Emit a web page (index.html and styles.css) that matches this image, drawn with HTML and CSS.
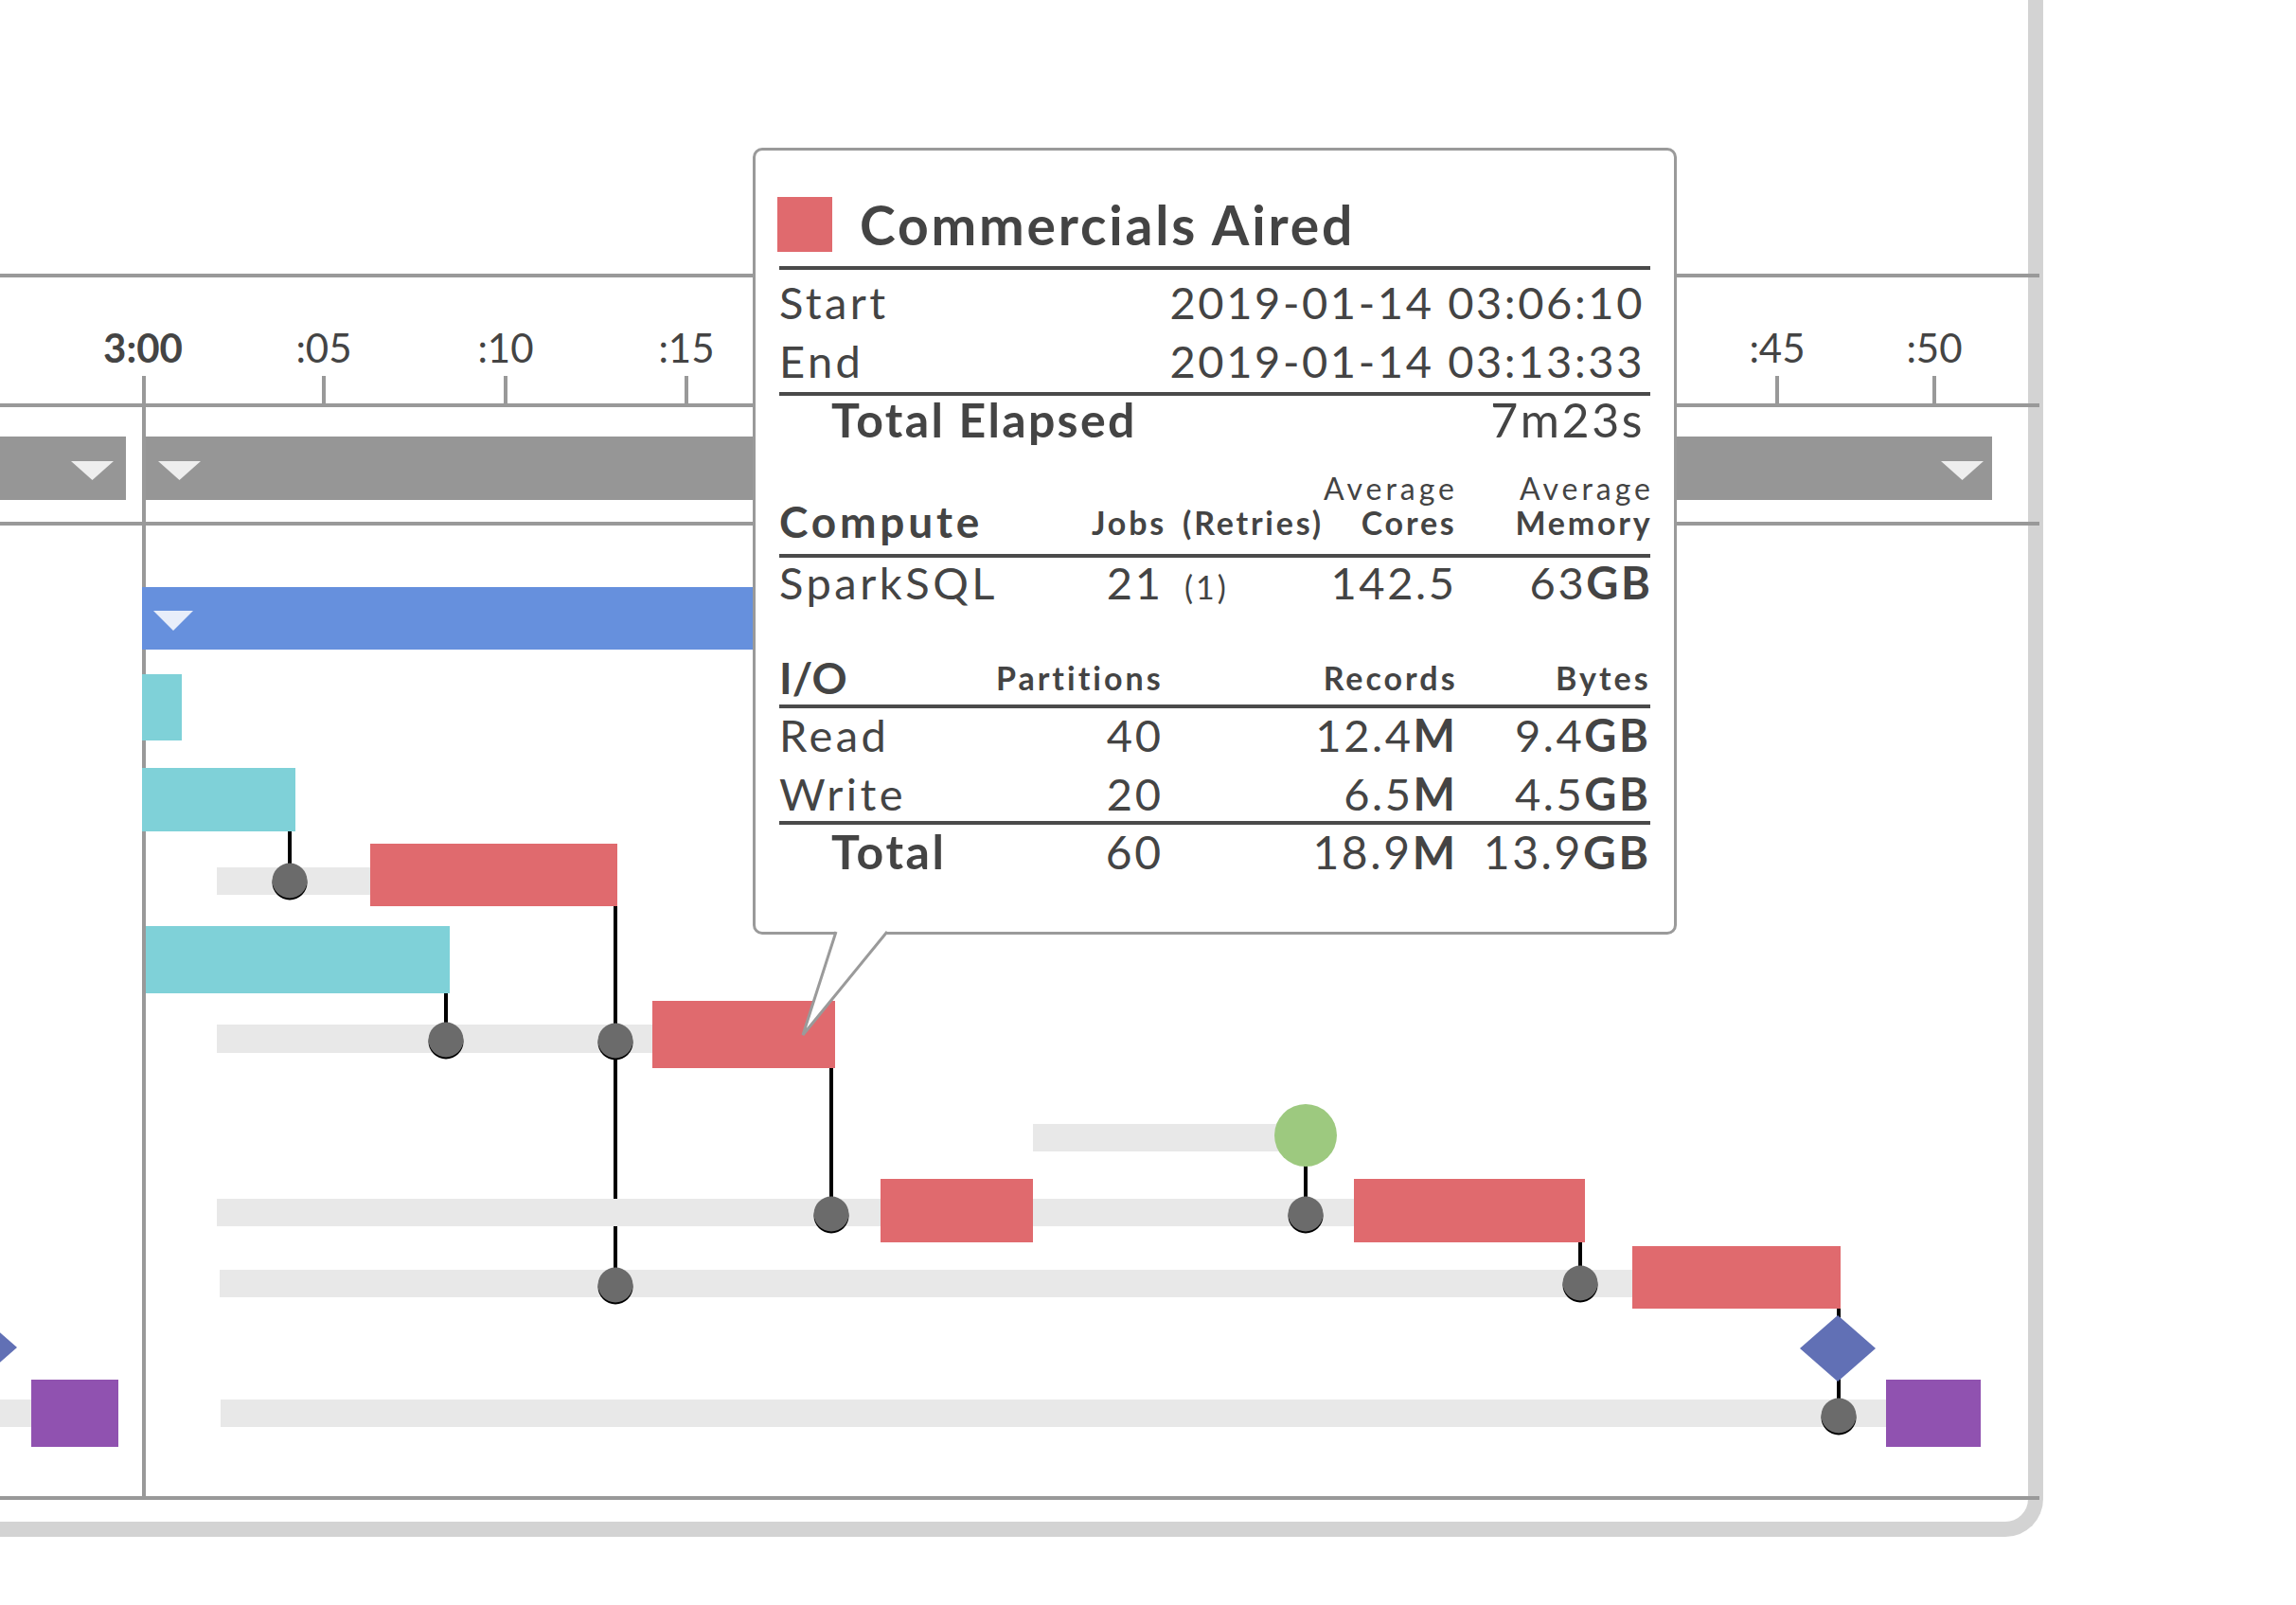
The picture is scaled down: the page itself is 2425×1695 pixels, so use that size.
FILE: index.html
```html
<!DOCTYPE html>
<html lang="en">
<head>
<meta charset="utf-8">
<title>Timeline tooltip</title>
<link rel="stylesheet" href="styles.css">
</head>
<body>
<div class="stage">
  <div class="frame">
    <svg class="chart" width="2142" height="1607" viewBox="0 0 2142 1607" xmlns="http://www.w3.org/2000/svg">
      <!-- axis -->
      <line class="axis" x1="0" y1="291" x2="2154" y2="291"/>
      <line class="axis" x1="0" y1="428" x2="2154" y2="428"/>
      <line class="axis" x1="0" y1="553" x2="2154" y2="553"/>
      <line class="axis" x1="0" y1="1582" x2="2154" y2="1582"/>
      <line class="axis" x1="152" y1="397" x2="152" y2="1582"/>
      <line class="axis" x1="342" y1="397" x2="342" y2="428"/>
      <line class="axis" x1="534" y1="397" x2="534" y2="428"/>
      <line class="axis" x1="725" y1="397" x2="725" y2="428"/>
      <line class="axis" x1="1877" y1="397" x2="1877" y2="428"/>
      <line class="axis" x1="2043" y1="397" x2="2043" y2="428"/>
      <text class="lbl lbl-b" x="151" y="383">3:00</text>
      <text class="lbl" x="342" y="383">:05</text>
      <text class="lbl" x="534" y="383">:10</text>
      <text class="lbl" x="725" y="383">:15</text>
      <text class="lbl" x="1877" y="383">:45</text>
      <text class="lbl" x="2043" y="383">:50</text>

      <!-- group bars -->
      <rect class="gbar" x="-10" y="461" width="143" height="67"/>
      <rect class="gbar" x="154" y="461" width="1950" height="67"/>
      <polygon class="tri" points="75,487 120,487 97.5,507"/>
      <polygon class="tri" points="167,487 212,487 189.5,507"/>
      <polygon class="tri" points="2050,487 2095,487 2072.5,507"/>

      <rect class="blue" x="150" y="620" width="1150" height="66"/>
      <polygon class="tri-blue" points="162,645 204,645 183,666"/>

      <rect class="teal" x="150" y="712" width="42" height="70"/>
      <rect class="teal" x="150" y="811" width="162" height="67"/>
      <rect class="teal" x="154" y="978" width="321" height="71"/>

      <!-- dependency stems -->
      <line class="stem" x1="306" y1="878" x2="306" y2="930"/>
      <line class="stem" x1="471" y1="1049" x2="471" y2="1098"/>
      <line class="stem" x1="650" y1="957" x2="650" y2="1357"/>
      <line class="stem" x1="878" y1="1128" x2="878" y2="1282"/>
      <line class="stem" x1="1379" y1="1199" x2="1379" y2="1282"/>
      <line class="stem" x1="1669" y1="1312" x2="1669" y2="1355"/>
      <line class="stem" x1="1942" y1="1382" x2="1942" y2="1495"/>

      <!-- tracks -->
      <rect class="track" x="229" y="916" width="162" height="29"/>
      <rect class="track" x="229" y="1082" width="460" height="30"/>
      <rect class="track" x="1091" y="1187" width="260" height="29"/>
      <rect class="track" x="229" y="1266" width="1201" height="29"/>
      <rect class="track" x="232" y="1341" width="1492" height="29"/>
      <rect class="track" x="233" y="1478" width="1759" height="29"/>
      <rect class="track" x="-10" y="1478" width="43" height="29"/>

      <!-- task bars -->
      <rect class="red" x="391" y="891" width="261" height="66"/>
      <rect class="red" x="689" y="1057" width="193" height="71"/>
      <rect class="red" x="930" y="1245" width="161" height="67"/>
      <rect class="red" x="1430" y="1245" width="244" height="67"/>
      <rect class="red" x="1724" y="1316" width="220" height="66"/>
      <rect class="purple" x="1992" y="1457" width="100" height="71"/>
      <rect class="purple" x="33" y="1457" width="92" height="71"/>

      <polygon class="dia" points="1941,1389 1981,1424 1941,1459 1901,1424"/>
      <polygon class="dia" points="-22,1388 18,1423 -22,1458 -62,1423"/>

      <circle class="green" cx="1379" cy="1199" r="33"/>

      <!-- dots -->
      <circle class="dot-rim" cx="306" cy="932" r="18.5"/><circle class="dot" cx="306" cy="930" r="18.5"/>
      <circle class="dot-rim" cx="471" cy="1100" r="18.5"/><circle class="dot" cx="471" cy="1098" r="18.5"/>
      <circle class="dot-rim" cx="650" cy="1101" r="18.5"/><circle class="dot" cx="650" cy="1099" r="18.5"/>
      <circle class="dot-rim" cx="650" cy="1359" r="18.5"/><circle class="dot" cx="650" cy="1357" r="18.5"/>
      <circle class="dot-rim" cx="878" cy="1284" r="18.5"/><circle class="dot" cx="878" cy="1282" r="18.5"/>
      <circle class="dot-rim" cx="1379" cy="1284" r="18.5"/><circle class="dot" cx="1379" cy="1282" r="18.5"/>
      <circle class="dot-rim" cx="1669" cy="1357" r="18.5"/><circle class="dot" cx="1669" cy="1355" r="18.5"/>
      <circle class="dot-rim" cx="1942" cy="1497" r="18.5"/><circle class="dot" cx="1942" cy="1495" r="18.5"/>
    </svg>

    <div class="tip">
      <div class="tip-title"><span class="swatch"></span><span>Commercials Aired</span></div>
      <div class="times">
        <div class="kv"><span>Start</span><span>2019-01-14 03:06:10</span></div>
        <div class="kv"><span>End</span><span>2019-01-14 03:13:33</span></div>
      </div>
      <div class="kv elapsed"><span class="strong">Total Elapsed</span><span>7m23s</span></div>

      <div class="cgrid chead">
        <div class="sec">Compute</div>
        <div class="h r">Jobs</div>
        <div class="h retries">(Retries)</div>
        <div class="h r stack"><span class="avg">Average</span><span>Cores</span></div>
        <div class="h r stack"><span class="avg">Average</span><span>Memory</span></div>
      </div>
      <div class="cgrid crow">
        <div class="name">SparkSQL</div>
        <div class="r">21</div>
        <div class="paren">(1)</div>
        <div class="r">142.5</div>
        <div class="r">63<b>GB</b></div>
      </div>

      <div class="igrid ihead">
        <div class="sec io">I/O</div>
        <div class="h r">Partitions</div>
        <div class="h r">Records</div>
        <div class="h r bytes">Bytes</div>
      </div>
      <div class="igrid irow">
        <div class="name">Read</div>
        <div class="r">40</div>
        <div class="r">12.4<b>M</b></div>
        <div class="r bytes">9.4<b>GB</b></div>
      </div>
      <div class="igrid irow write">
        <div class="name">Write</div>
        <div class="r">20</div>
        <div class="r">6.5<b>M</b></div>
        <div class="r bytes">4.5<b>GB</b></div>
      </div>
      <div class="igrid irow itotal">
        <div class="strong indent">Total</div>
        <div class="r">60</div>
        <div class="r">18.9<b>M</b></div>
        <div class="r bytes">13.9<b>GB</b></div>
      </div>

      <svg class="tail" width="100" height="120" viewBox="0 0 100 120" xmlns="http://www.w3.org/2000/svg">
        <polygon class="tail-fill" points="37,0 2,111 91,0"/>
        <polyline class="tail-line" points="37,2 2,111 91,2"/>
      </svg>
    </div>
  </div>
</div>
</body>
</html>
```

FILE: styles.css
```css
html, body {
  margin: 0;
  padding: 0;
  background: #ffffff;
}

body {
  font-family: Lato, "Open Sans", "Liberation Sans", sans-serif;
  color: #444444;
}

.stage {
  position: relative;
  width: 2425px;
  height: 1695px;
  overflow: hidden;
}

.frame {
  position: relative;
  width: 2142px;
  height: 1607px;
  border-right: 16px solid #d3d3d3;
  border-bottom: 16px solid #d3d3d3;
  border-bottom-right-radius: 40px;
}

.chart {
  display: block;
  overflow: visible;
}

.axis { stroke: #999999; stroke-width: 4; }
.stem { stroke: #000000; stroke-width: 4; }
.lbl {
  font-family: Lato, "Open Sans", sans-serif;
  font-size: 42px;
  fill: #444444;
  text-anchor: middle;
}
.lbl-b { font-weight: 700; }
.gbar { fill: #969696; }
.tri { fill: #eeeeee; }
.blue { fill: #6690dd; }
.tri-blue { fill: #e8eefa; }
.teal { fill: #7fd1d8; }
.track { fill: #e8e8e8; }
.red { fill: #e06a6e; }
.purple { fill: #9052b0; }
.green { fill: #9dc97f; }
.dia { fill: #6170b5; }
.dot { fill: #6b6b6b; }
.dot-rim { fill: #000000; }

/* tooltip */
.tip {
  position: absolute;
  left: 795px;
  top: 156px;
  width: 976px;
  box-sizing: border-box;
  border: 3px solid #9a9a9a;
  border-radius: 10px;
  background: #ffffff;
  padding: 49px 25px 56px 25px;
  color: #444444;
  letter-spacing: 2.6px;
}

.tip-title {
  display: flex;
  align-items: center;
  gap: 29px;
  height: 58px;
  padding-bottom: 15px;
  border-bottom: 4px solid #4a4a4a;
  font-size: 57px;
  font-weight: 700;
  line-height: 57px;
  letter-spacing: 2.8px;
}

.swatch {
  width: 58px;
  height: 58px;
  margin-left: -2px;
  background: #e06a6e;
  flex: none;
}

.times {
  padding-top: 3px;
  padding-bottom: 2px;
  border-bottom: 4px solid #4a4a4a;
}

.kv {
  display: flex;
  justify-content: space-between;
  align-items: baseline;
  font-size: 47px;
  line-height: 62px;
  padding-right: 6px;
}

.kv > span:first-child { letter-spacing: 3.4px; }

.kv.elapsed {
  font-size: 50px;
  line-height: 50px;
  padding-left: 55px;
}

.kv.elapsed > span:first-child { letter-spacing: 2.3px; }

.strong { font-weight: 700; }

.r {
  text-align: right;
  margin-right: -2.6px;
}

b { font-weight: 700; }

.sec {
  font-size: 46px;
  font-weight: 700;
  letter-spacing: 3.8px;
}

.sec.io { letter-spacing: 0; }

.h {
  font-size: 34px;
  font-weight: 700;
  letter-spacing: 2.8px;
}

.name { letter-spacing: 3.5px; }

/* compute table */
.cgrid {
  display: grid;
  grid-template-columns: 330px 73px 166px 144px 207px;
}

.chead {
  margin-top: 36px;
  align-items: end;
  padding-bottom: 9px;
  border-bottom: 4px solid #4a4a4a;
}

.chead .sec { line-height: 50px; }
.chead .h { line-height: 48px; }

.retries { padding-left: 23px; }

.stack {
  display: flex;
  flex-direction: column;
  align-items: flex-end;
}

.avg {
  font-size: 32px;
  font-weight: 400;
  line-height: 24px;
  letter-spacing: 4px;
  margin-right: -1.4px;
}

.crow {
  align-items: baseline;
  font-size: 47px;
  line-height: 52px;
}

.paren {
  font-size: 34px;
  padding-left: 25px;
  letter-spacing: 3px;
}

/* io table */
.igrid {
  display: grid;
  grid-template-columns: 217px 186px 311px 206px;
}

.ihead {
  margin-top: 42px;
  align-items: end;
  border-bottom: 4px solid #4a4a4a;
}

.ihead .sec, .ihead .h { line-height: 56px; }

.ihead .r { letter-spacing: 3px; }

.bytes { padding-right: 2px; }

.irow {
  align-items: baseline;
  font-size: 47px;
  line-height: 56px;
}

.irow.write {
  padding-top: 6px;
  line-height: 57px;
  border-bottom: 4px solid #4a4a4a;
}

.irow.itotal {
  font-size: 48px;
  line-height: 57px;
}

.itotal .strong { font-size: 50px; }

.indent { padding-left: 55px; }

.tail {
  position: absolute;
  left: 48px;
  top: calc(100% - 2px);
  overflow: visible;
}

.tail-fill { fill: #ffffff; }
.tail-line {
  fill: none;
  stroke: #9a9a9a;
  stroke-width: 3;
  stroke-linejoin: miter;
}
```
